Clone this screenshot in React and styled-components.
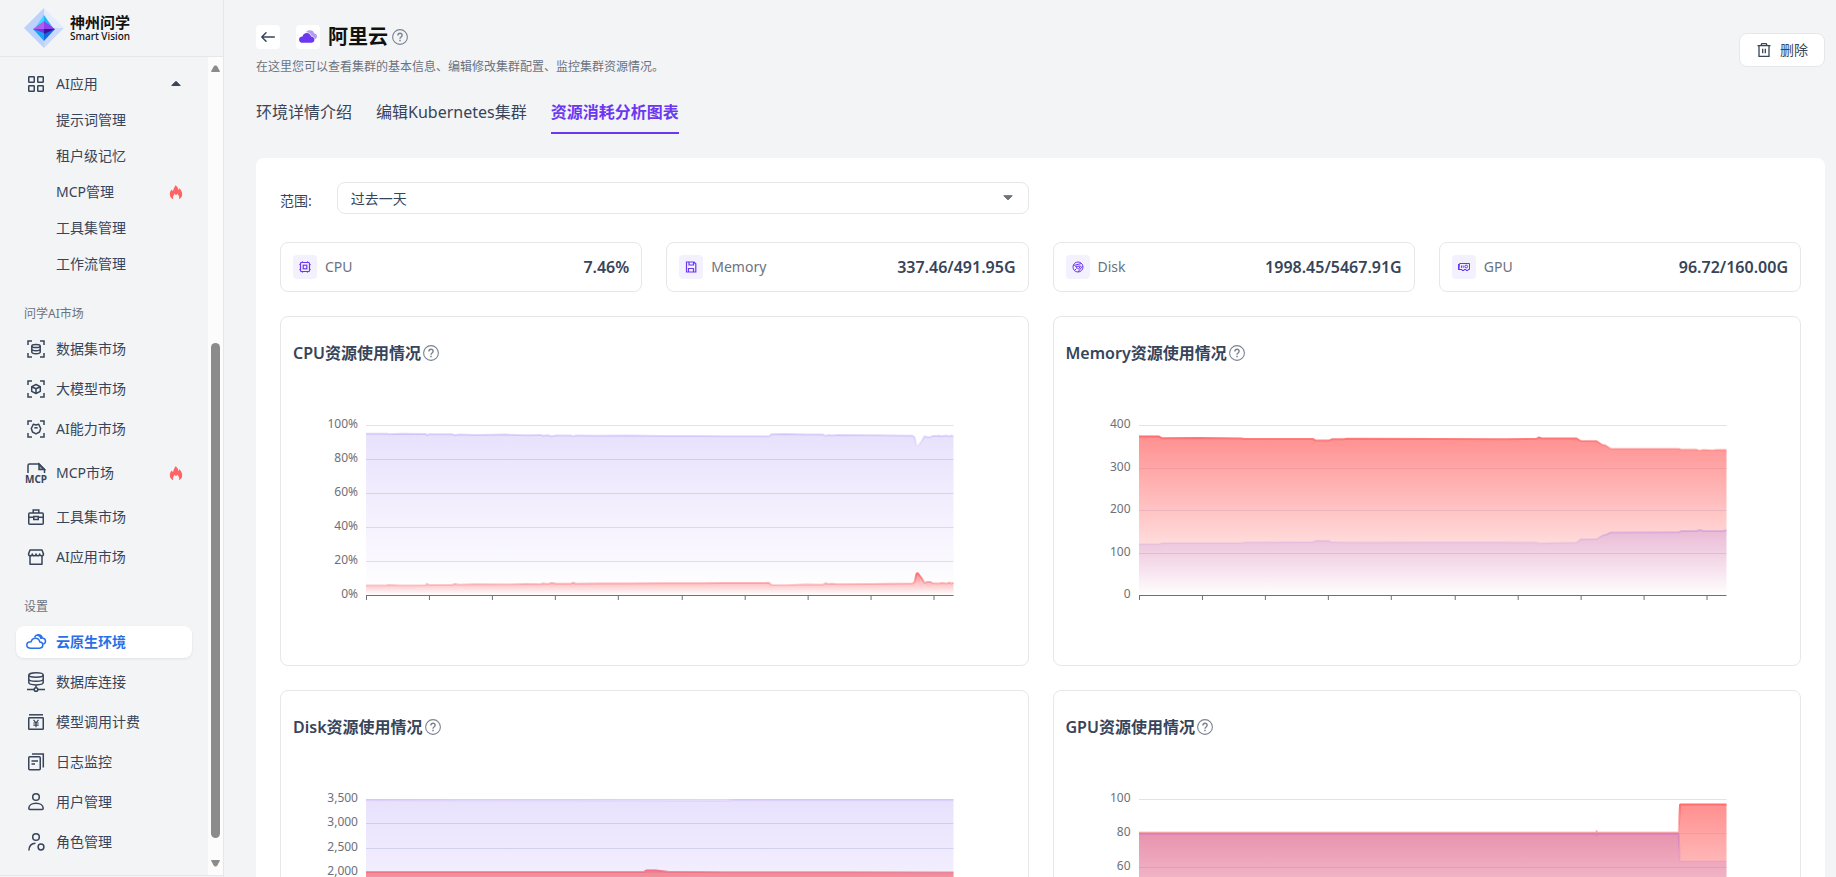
import React, { useId } from "react";
import styled, { createGlobalStyle, css } from "styled-components";

const c = {
  page: "#f3f4f6",
  line: "#e5e7eb",
  ink: "#374459",
  muted: "#6b7280",
  purple: "#6b38f0",
  blue: "#2970e6",
  red: "#ff6b6b",
};

const GlobalStyle = createGlobalStyle`
  *, *::before, *::after { box-sizing: border-box; }
  body {
    margin: 0;
    background: ${c.page};
    color: ${c.ink};
    font-family: "Noto Sans", "Noto Sans CJK SC", sans-serif;
    font-size: 14px;
  }
  h1, h2, p, ul { margin: 0; padding: 0; }
  ul { list-style: none; }
  a { color: inherit; text-decoration: none; }
  button, select { font: inherit; color: inherit; }
  svg { display: block; flex: none; }
`;

/* ---------- layout ---------- */

const Shell = styled.div`
  display: flex;
  height: 100vh;
  overflow: hidden;
`;

const Sidebar = styled.aside`
  display: flex;
  flex-direction: column;
  flex: none;
  width: 224px;
  border-right: 1px solid ${c.line};
`;

const Brand = styled.div`
  display: flex;
  align-items: center;
  gap: 6px;
  height: 57px;
  padding: 0 24px;
  border-bottom: 1px solid ${c.line};
  color: #111;
`;

const BrandText = styled.div`
  display: flex;
  flex-direction: column;
`;

const BrandName = styled.span`
  font-size: 15px;
  line-height: 16px;
  font-weight: 700;
`;

const BrandSub = styled.span`
  font-size: 10px;
  line-height: 12px;
  font-weight: 500;
`;

const SideBody = styled.div`
  display: flex;
  flex: 1;
  min-height: 0;
`;

const SideFoot = styled.div`
  height: 2px;
  border-top: 1px solid ${c.line};
`;

const Nav = styled.nav`
  flex: 1;
  padding: 11px 16px;
  overflow: hidden;
`;

const NavList = styled.ul`
  display: flex;
  flex-direction: column;
  gap: ${(p) => (p.$dense ? 4 : 8)}px;
`;

const NavLabel = styled.h2`
  margin: 25px 0 10px;
  padding-left: 8px;
  color: ${c.muted};
  font-size: 12px;
  line-height: 18px;
  font-weight: 400;
`;

const NavLink = styled.a`
  display: flex;
  align-items: center;
  gap: 8px;
  height: ${(p) => (p.$tall ? 40 : 32)}px;
  padding: 0 8px;
  padding-left: ${(p) => (p.$child ? 40 : 8)}px;
  border-radius: 8px;
  line-height: 20px;
  ${(p) =>
    p.$active &&
    css`
      background: #fff;
      color: ${c.blue};
      font-weight: 700;
      box-shadow: 0 1px 3px rgba(0, 0, 0, 0.08);
    `}
`;

const NavText = styled.span`
  flex: 1;
`;

const ScrollRail = styled.div`
  display: flex;
  flex-direction: column;
  align-items: center;
  width: 15px;
  background: #fcfcfc;
`;

const RailSpace = styled.div`
  flex: ${(p) => p.$grow} 0 0;
`;

const RailThumb = styled.div`
  flex: 495 0 0;
  width: 9px;
  border-radius: 5px;
  background: #8b8b8b;
`;

const Main = styled.main`
  flex: 1;
  min-width: 0;
  padding: 24px 11px 24px 32px;
  overflow-y: auto;
  scrollbar-width: none;
`;

const PageHead = styled.header`
  display: flex;
  align-items: center;
  justify-content: space-between;
`;

const TitleRow = styled.div`
  display: flex;
  align-items: center;
`;

const Tile = styled.span`
  display: flex;
  align-items: center;
  justify-content: center;
  flex: none;
  width: 24px;
  height: 24px;
  border-radius: 4px;
  background: ${(p) => (p.$tint ? "#f4f1ff" : "#fff")};
  color: ${c.purple};
`;

const BackButton = styled.button`
  display: flex;
  align-items: center;
  justify-content: center;
  width: 24px;
  height: 24px;
  margin-right: 16px;
  padding: 0;
  border: 0;
  border-radius: 4px;
  background: #fff;
`;

const PageTitle = styled.h1`
  margin: 0 4px 0 8px;
  color: #111;
  font-size: 20px;
  line-height: 26px;
  font-weight: 700;
`;

const PageDesc = styled.p`
  margin-top: 8px;
  color: ${c.muted};
  font-size: 12px;
  line-height: 18px;
`;

const DeleteButton = styled.button`
  display: flex;
  align-items: center;
  gap: 8px;
  height: 34px;
  padding: 0 16px;
  border: 1px solid ${c.line};
  border-radius: 8px;
  background: #fff;
  line-height: 20px;
`;

const Tabs = styled.nav`
  display: flex;
  gap: 24px;
  margin-top: 24px;
`;

const Tab = styled.a`
  padding-bottom: 8px;
  border-bottom: 2px solid ${(p) => (p.$active ? c.purple : "transparent")};
  color: ${(p) => (p.$active ? c.purple : c.ink)};
  font-size: 16px;
  line-height: 24px;
  font-weight: ${(p) => (p.$active ? 700 : 400)};
`;

const Panel = styled.section`
  margin-top: 24px;
  padding: 24px;
  border-radius: 8px;
  background: #fff;
`;

const Halves = styled.div`
  display: grid;
  grid-template-columns: repeat(2, minmax(0, 1fr));
  gap: 24px;
`;

const Quarters = styled.div`
  display: grid;
  grid-template-columns: repeat(4, minmax(0, 1fr));
  gap: 24px;
  margin: 28px 0 24px;
`;

const Field = styled.div`
  display: flex;
  align-items: center;
  gap: 25px;
`;

const FieldLabel = styled.label`
  padding-top: 5px;
  line-height: 20px;
`;

const SelectBox = styled.div`
  display: grid;
  flex: 1;
  align-items: center;
  > * {
    grid-area: 1 / 1;
  }
  > svg {
    justify-self: end;
    margin-right: 15px;
    pointer-events: none;
  }
`;

const Select = styled.select`
  appearance: none;
  width: 100%;
  height: 32px;
  padding: 0 13px;
  border: 1px solid ${c.line};
  border-radius: 8px;
  background: #fff;
`;

const Stat = styled.div`
  display: flex;
  align-items: center;
  gap: 8px;
  height: 50px;
  padding: 0 12px;
  border: 1px solid ${c.line};
  border-radius: 8px;
`;

const StatName = styled.span`
  flex: 1;
  color: ${c.muted};
  line-height: 20px;
`;

const StatValue = styled.span`
  font-size: 16px;
  line-height: 24px;
  font-weight: 600;
`;

const ChartCard = styled.article`
  min-height: 350px;
  padding: 24px 12px;
  border: 1px solid ${c.line};
  border-radius: 8px;
`;

const ChartTitle = styled.h2`
  display: flex;
  align-items: center;
  gap: 2px;
  font-size: 16px;
  line-height: 24px;
  font-weight: 600;
`;

const Plot = styled.div`
  display: grid;
  grid-template-columns: 73px minmax(0, 1fr) 62px;
  margin-top: 51px;
`;

const Axis = styled.div`
  display: flex;
  flex-direction: column;
  justify-content: space-between;
  height: 186px;
  padding-right: 8px;
  color: #6e7079;
  font-size: 12px;
  line-height: 16px;
  text-align: right;
`;

const PlotSvg = styled.svg`
  width: 100%;
  height: 176px;
  margin-top: 9px;
  overflow: visible;
`;

/* ---------- icons ---------- */

const Icon = ({ size = 24, w = 1.5, children, ...rest }) => (
  <svg
    width={size}
    height={size}
    viewBox={`0 0 ${size} ${size}`}
    fill="none"
    stroke="currentColor"
    strokeWidth={w}
    aria-hidden="true"
    {...rest}
  >
    {children}
  </svg>
);

const Corners = () => <path d="M4 8V4h4M16 4h4v4M20 16v4h-4M8 20H4v-4" />;

const icons = {
  apps: (
    <Icon>
      <rect x="4.75" y="4.75" width="5.5" height="5.5" rx="0.6" />
      <rect x="13.75" y="4.75" width="5.5" height="5.5" rx="0.6" />
      <rect x="4.75" y="13.75" width="5.5" height="5.5" rx="0.6" />
      <rect x="13.75" y="13.75" width="5.5" height="5.5" rx="0.6" />
    </Icon>
  ),
  dataset: (
    <Icon>
      <Corners />
      <ellipse cx="12" cy="9" rx="4.2" ry="1.6" />
      <path d="M7.8 9v6c0 .9 1.9 1.7 4.2 1.7s4.2-.8 4.2-1.7V9M7.8 12c0 .9 1.9 1.7 4.2 1.7s4.2-.8 4.2-1.7" />
    </Icon>
  ),
  model: (
    <Icon>
      <Corners />
      <path d="M12 7.5l4.3 2.2v4.6L12 16.5l-4.3-2.2V9.7zM7.7 9.7l4.3 2 4.3-2M12 11.7v4.8" strokeLinejoin="round" />
    </Icon>
  ),
  ability: (
    <Icon>
      <Corners />
      <path d="M9.3 7.3L12 8l2.7-.7 2 4.2-1.2 3.5L12 16.8 8.5 15l-1.2-3.5z" strokeLinejoin="round" />
      <path d="M10.3 10.8h3.4" />
    </Icon>
  ),
  mcp: (
    <Icon overflow="visible">
      <path d="M4 12V4.5c0-1 .5-1.500 1.500-1.500H15l5.500 5.500V12" />
      <path d="M15 3v5.500h5.500z" fill="currentColor" fillOpacity="0.5" />
      <text x="12" y="21.500" textAnchor="middle" fontSize="10" fontWeight="700" fill="currentColor" stroke="none">
        MCP
      </text>
    </Icon>
  ),
  toolbox: (
    <Icon>
      <rect x="4.75" y="8" width="14.5" height="11.25" rx="1" />
      <path d="M9.2 8V5h5.600v3M4.750 12.200h4.800M14.500 12.200h4.750M9.750 11.500h4.500v3h-4.500z" />
    </Icon>
  ),
  store: (
    <Icon>
      <path d="M6 5h12l1.500 4c0 1-.8 1.800-2 1.800s-1.800-.8-1.800-1.800c0 1-.8 1.800-1.850 1.800S12 10 12 9c0 1-.8 1.800-1.850 1.800S8.300 10 8.300 9c0 1-.7 1.800-1.800 1.800s-2-.8-2-1.800z" strokeLinejoin="round" />
      <path d="M6 11v8.200h12V11" strokeLinejoin="round" />
    </Icon>
  ),
  cloud: (
    <Icon>
      <path d="M7 18.200h8.500c2 0 3.300-1.400 3.300-3.100 0-1.800-1.300-3.100-3-3.100-.5-2.400-2.200-3.800-4.300-3.800-2.300 0-3.900 1.500-4.400 3.600-2.300 0-4.300 1-4.300 3.200 0 1.900 1.800 3.200 4.200 3.200z" strokeLinejoin="round" />
      <path d="M10.500 7.300c.8-1.600 2-2.500 3.600-2.500 2.200 0 3.800 1.300 4.200 3.300 1.900.3 3.200 1.500 3.200 3.200 0 1.400-.8 2.400-2.300 2.800M13 5.300c2.400.1 3.700 1.600 4 3.700" />
    </Icon>
  ),
  database: (
    <Icon>
      <ellipse cx="12" cy="5" rx="7.2" ry="2.2" />
      <path d="M4.800 5v7.600c0 1.300 3.200 2.300 7.200 2.300s7.200-1 7.200-2.300V5M4.800 8.900c0 1.300 3.200 2.300 7.200 2.300s7.200-1 7.200-2.300M12 15v2.500M3 19.500h7M14 19.500h7" />
      <circle cx="12" cy="19.500" r="1.800" />
    </Icon>
  ),
  billing: (
    <Icon>
      <path d="M5 4.800h14" />
      <rect x="4.75" y="7.75" width="14.5" height="11.5" rx="0.6" />
      <path d="M9.500 9.800l2.500 3 2.500-3M12 12.800v4.400M9.300 13h5.400M9.300 15.200h5.400" strokeWidth="1.2" />
    </Icon>
  ),
  logs: (
    <Icon>
      <path d="M8 4h11.300v13.500" />
      <rect x="4.75" y="6.75" width="11.5" height="13" rx="1" />
      <path d="M7.500 11h6.500M7.500 14h3.500" />
    </Icon>
  ),
  user: (
    <Icon>
      <circle cx="12" cy="7" r="3.3" />
      <path d="M5.800 19.500c-.7 0-1-.5-1-1.200 0-3 3.200-5 7.200-5s7.200 2 7.200 5c0 .7-.3 1.200-1 1.200z" />
    </Icon>
  ),
  role: (
    <Icon>
      <circle cx="12" cy="7" r="3.3" />
      <path d="M4.900 20.500c.2-4.700 3-7.300 6.600-7.300" />
      <circle cx="17" cy="17" r="2.9" />
    </Icon>
  ),
};

const Fire = () => (
  <Icon size={16} fill="#ff6464" stroke="none">
    <path d="M7.300 1.200c1.500.9 3 2.400 3 4.700.6-.3.900-.9 1-1.600 1.700 1.600 2.900 3.700 2.900 5.900 0 2.300-1.200 4-3.100 5 .5-2.200-.5-3.900-2-5.600-.2.900-.6 1.500-1.300 1.900-.1-.7-.5-1.200-1-1.700C5.300 11.300 4.600 13 5.200 15.200 3.200 14.300 1.800 12.600 1.800 10.200c0-1.900.8-3.400 2-4.700.2.800.6 1.300 1.300 1.600C5.300 4.600 6.700 3.200 7.300 1.200z" />
  </Icon>
);

const CaretUp = () => (
  <Icon size={16} fill={c.ink} w={1} strokeLinejoin="round">
    <path d="M3.800 9.500h8.400L8 5.300z" />
  </Icon>
);

const CaretDown = () => (
  <Icon size={12} fill={c.muted} stroke={c.muted} w={1} strokeLinejoin="round">
    <path d="M1.800 3.700h8.400L6 7.900z" />
  </Icon>
);

const RailArrow = ({ up }) => (
  <svg width="15" height="20" fill="#8b8b8b" stroke="#8b8b8b" strokeLinejoin="round" aria-hidden="true">
    <path d={up ? "M3.500 14.500h8l-3-5.500h-2z" : "M3.500 5.500h8l-3 5.500h-2z"} />
  </svg>
);

const Help = () => (
  <Icon size={16} w={1.1} stroke="#7b8290">
    <circle cx="8" cy="8" r="7.4" />
    <path d="M5.900 6.500c0-1.300.9-2.200 2.100-2.200s2.100.8 2.100 2c0 1.700-2.100 1.600-2.100 3.400" strokeWidth="1.4" />
    <path d="M8 10.800v1.500" strokeWidth="1.5" />
  </Icon>
);

const BackArrow = () => (
  <Icon size={16} strokeLinecap="round" strokeLinejoin="round">
    <path d="M14.300 8H1.800M6 3.800L1.800 8 6 12.200" />
  </Icon>
);

const Trash = () => (
  <Icon size={16} w={1.3}>
    <path d="M1.500 3.600h13M5 3.300l.8-1.700h4.400l.8 1.700M3 3.600v10.800h10V3.600M6.700 6.800v4.400M9.300 6.800v4.400" />
  </Icon>
);

const CloudFill = () => (
  <Icon size={20} fill={c.purple} stroke="none">
    <path d="M8 5.200c1-1.500 2.300-2 4-2 2.300 0 3.600 1.200 4 3.100 1.700.2 3 1.300 3 3 0 1.400-.8 2.500-2.200 2.900-.5-1.900-1.800-2.900-3.200-3.100C13 6.800 11 5.200 8 5.200z" opacity="0.5" />
    <path d="M4.800 15.800c-2.200 0-3.800-1.200-3.800-3.100 0-1.900 1.500-3.100 3.500-3.100C5 7.300 6.600 6 8.800 6c2.200 0 3.800 1.400 4.200 3.600 2 .1 3.400 1.300 3.400 3.100s-1.300 3.100-3.300 3.100z" />
  </Icon>
);

const LogoMark = () => (
  <svg width="40" height="40" viewBox="0 0 40 40" aria-hidden="true">
    <path d="M20 0L0 20l20 20z" fill="#bcd2fb" />
    <path d="M20 0l20 20H20z" fill="#e3ebfd" />
    <path d="M20 40l20-20H20z" fill="#c9dafb" />
    <path d="M20 7l-9 13h9z" fill="#35dcfb" />
    <path d="M20 7l9 13h-9z" fill="#22b4f6" />
    <path d="M20 33L9 21h11z" fill="#1ea2f4" />
    <path d="M20 33l11-12H20z" fill="#1169e8" />
    <path d="M9 21l11-8v9z" fill="#b25cf2" />
    <path d="M31 21l-11-8v9z" fill="#9040ee" />
    <path d="M9 21h11v4z" fill="#6a3ae0" />
    <path d="M31 21H20v5z" fill="#3b129c" />
  </svg>
);

const statIcons = {
  cpu: (
    <Icon size={12} w={1.2}>
      <rect x="1.5" y="1.5" width="9" height="9" rx="1" />
      <rect x="4.2" y="4.2" width="3.6" height="3.6" />
      <path d="M3.500 0v1M8.500 0v1M3.500 11v1M8.500 11v1M0 3.500h1M0 8.500h1M11 3.500h1M11 8.500h1" strokeOpacity="0.6" />
    </Icon>
  ),
  memory: (
    <Icon size={12} w={1.2}>
      <path d="M1.500 1h7.500l1.800 1.800V11H1.500zM4 1v3h4.500V1M3.500 11V7.500h5V11" />
    </Icon>
  ),
  disk: (
    <Icon size={12} w={1}>
      <circle cx="6" cy="6" r="5" />
      <path d="M1.500 4.500L9.500 2.500M3.500 5.500l5-.5-2 3zM10.500 5L6 11M2.500 9.500l2-2" />
    </Icon>
  ),
  gpu: (
    <Icon size={12} w={1}>
      <path d="M1.500 2.500h10v6h-1.500v1h-2v-1h-2v1h-2v-1h-3zM.5 3v6" />
      <circle cx="8.2" cy="5.5" r="1.4" />
      <path d="M3.500 4.500v2.300M5.200 4.500v2.300" />
    </Icon>
  ),
};

/* ---------- data ---------- */

const toPairs = (s) => s.trim().split(/\s+/).map((p) => p.split(",").map(Number));

const cpuUsed = toPairs(`0,160.5 21,160.5 22,160 35,160.4 60,160.3 61,158.8 63,160 86,160 89,159 93,159.8
  110,159.3 140,159.6 160,159 175,159.3 177,158.5 182,159 186,158 190,158.8 205,158.8 207,157.8 210,158.8
  233,158.4 260,158.6 300,158.2 334,158.2 360,158 400,158 403,157.7 406,160 420,160.3 440,159.6 457,159.8
  460,158.3 463,159.3 466,158.8 472,159.3 506,158.9 547,158.5 549,157 551,149 552,148 556,153 559,158 562,157
  565,157 567,158.3 574,158.5 576,158 581,158.6 584,157.7 586,158.7 588,157.5`);
const cpuFree = cpuUsed.map(([x, y]) => [x, 169.2 - y]);

const memUsed = toPairs(`0,11.5 20,11.5 23,13.3 60,13 102,13.4 106,14 174,14 177,15.6 190,15.6 193,14.3
  205,14.3 208,13.8 300,14 366,14.2 398,13.8 400,12.5 403,13.5 438,13.5 442,16 458,16.3 464,20 467,20.5 472,23.7
  540,23.7 543,24.6 558,24.6 561,25.5 565,24.8 574,25.3 578,24.8 588,24.8`);
const memFree = toPairs(`0,119 20,119 23,118 102,118 108,117.3 174,117 177,115.7 190,115.7 192,117 208,117.6
  300,117.3 350,117.2 398,117.5 400,118.3 438,117.5 442,114.3 458,114 464,110.5 467,109.8 472,107.5 540,107.3
  543,106 558,106 561,105 565,106 585,106 588,105`);

const diskUsed = toPairs(`0,73 278,73 281,71.5 290,71.5 302,72.8 360,73.2 480,73.2 588,73.4`);
const diskFree = toPairs(`0,1.2 100,1.4 200,1.5 360,1.7 370,1.2 588,1.2`);

const gpuUsed = toPairs(`0,33.2 457,33.2 458,31.5 459,33.2 540,33.2 541.5,5.5 588,5.5`);
const gpuFree = toPairs(`0,34.8 457,34.8 458,36 459,34.8 540,34.8 541.5,62 588,62`);

const charts = [
  { title: "CPU资源使用情况", ticks: ["100%", "80%", "60%", "40%", "20%", "0%"], used: cpuUsed, free: cpuFree },
  { title: "Memory资源使用情况", ticks: ["400", "300", "200", "100", "0"], used: memUsed, free: memFree },
  {
    title: "Disk资源使用情况",
    ticks: ["3,500", "3,000", "2,500", "2,000", "1,500", "1,000", "500", "0"],
    used: diskUsed,
    free: diskFree,
  },
  { title: "GPU资源使用情况", ticks: ["100", "80", "60", "40", "20", "0"], used: gpuUsed, free: gpuFree },
];

const stats = [
  { icon: "cpu", name: "CPU", value: "7.46%" },
  { icon: "memory", name: "Memory", value: "337.46/491.95G" },
  { icon: "disk", name: "Disk", value: "1998.45/5467.91G" },
  { icon: "gpu", name: "GPU", value: "96.72/160.00G" },
];

const appLinks = [
  { text: "提示词管理" },
  { text: "租户级记忆" },
  { text: "MCP管理", hot: true },
  { text: "工具集管理" },
  { text: "工作流管理" },
];

const sections = [
  {
    label: "问学AI市场",
    items: [
      { icon: "dataset", text: "数据集市场" },
      { icon: "model", text: "大模型市场" },
      { icon: "ability", text: "AI能力市场" },
      { icon: "mcp", text: "MCP市场", hot: true, tall: true },
      { icon: "toolbox", text: "工具集市场" },
      { icon: "store", text: "AI应用市场" },
    ],
  },
  {
    label: "设置",
    items: [
      { icon: "cloud", text: "云原生环境", active: true },
      { icon: "database", text: "数据库连接" },
      { icon: "billing", text: "模型调用计费" },
      { icon: "logs", text: "日志监控" },
      { icon: "user", text: "用户管理" },
      { icon: "role", text: "角色管理" },
    ],
  },
];

/* ---------- parts ---------- */

function Series({ points, color, area, line }) {
  const id = useId();
  const path = "M" + points.map((p) => p.join(",")).join("L");
  const ys = points.map((p) => p[1]);
  const top = Math.min(...ys);
  const low = Math.max(...ys);
  return (
    <g>
      <defs>
        <linearGradient id={id + "a"} gradientUnits="userSpaceOnUse" x1="0" x2="0" y1={top} y2="170">
          <stop offset="0" stopColor={color} stopOpacity={area} />
          <stop offset="1" stopColor={color} stopOpacity="0" />
        </linearGradient>
        <linearGradient id={id + "l"} gradientUnits="userSpaceOnUse" x1="0" x2="0" y1={top - 1} y2={low + 2}>
          <stop offset="0" stopColor={color} stopOpacity={line} />
          <stop offset="1" stopColor={color} stopOpacity={line * 0.2} />
        </linearGradient>
      </defs>
      <path d={`${path}V170H0Z`} fill={`url(#${id}a)`} />
      <path d={path} fill="none" stroke={`url(#${id}l)`} strokeWidth="2" strokeLinejoin="bevel" />
    </g>
  );
}

function Chart({ title, ticks, used, free }) {
  const last = ticks.length - 1;
  return (
    <ChartCard>
      <ChartTitle>
        {title}
        <Help />
      </ChartTitle>
      <Plot>
        <Axis>
          {ticks.map((t) => (
            <span key={t}>{t}</span>
          ))}
        </Axis>
        <PlotSvg viewBox="0 0 588 176" preserveAspectRatio="none" role="img" aria-label={title}>
          {ticks.slice(0, last).map((t, i) => (
            <rect key={t} x="0" y={Math.round((i * 170) / last)} width="588" height="1" fill="#dfe3ef" />
          ))}
          <Series points={used} color={c.red} area={0.75} line={1} />
          <Series points={free} color={c.purple} area={0.15} line={0.2} />
          <g fill="#6e7079">
            <rect x="0" y="170" width="588" height="1" />
            {Array.from({ length: 10 }, (_, i) => (
              <rect key={i} x={Math.round(i * 63.1)} y="170" width="1" height="5" />
            ))}
          </g>
        </PlotSvg>
      </Plot>
    </ChartCard>
  );
}

function NavItem({ icon, text, hot, tall, active, child }) {
  return (
    <li>
      <NavLink href="#" $tall={tall} $active={active} $child={child} aria-current={active ? "page" : undefined}>
        {icon && icons[icon]}
        <NavText>{text}</NavText>
        {hot && <Fire />}
      </NavLink>
    </li>
  );
}

export default function App() {
  return (
    <>
      <GlobalStyle />
      <Shell>
        <Sidebar>
          <Brand>
            <LogoMark />
            <BrandText>
              <BrandName>神州问学</BrandName>
              <BrandSub>Smart Vision</BrandSub>
            </BrandText>
          </Brand>
          <SideBody>
            <Nav>
              <NavList $dense>
                <li>
                  <NavLink href="#">
                    {icons.apps}
                    <NavText>AI应用</NavText>
                    <CaretUp />
                  </NavLink>
                </li>
                {appLinks.map((item) => (
                  <NavItem key={item.text} child {...item} />
                ))}
              </NavList>
              {sections.map((s) => (
                <React.Fragment key={s.label}>
                  <NavLabel>{s.label}</NavLabel>
                  <NavList>
                    {s.items.map((item) => (
                      <NavItem key={item.text} {...item} />
                    ))}
                  </NavList>
                </React.Fragment>
              ))}
            </Nav>
            <ScrollRail>
              <RailArrow up />
              <RailSpace $grow={266} />
              <RailThumb />
              <RailSpace $grow={17} />
              <RailArrow />
            </ScrollRail>
          </SideBody>
          <SideFoot />
        </Sidebar>
        <Main>
          <PageHead>
            <div>
              <TitleRow>
                <BackButton type="button" aria-label="返回">
                  <BackArrow />
                </BackButton>
                <Tile>
                  <CloudFill />
                </Tile>
                <PageTitle>阿里云</PageTitle>
                <Help />
              </TitleRow>
              <PageDesc>在这里您可以查看集群的基本信息、编辑修改集群配置、监控集群资源情况。</PageDesc>
            </div>
            <DeleteButton type="button">
              <Trash />
              删除
            </DeleteButton>
          </PageHead>
          <Tabs>
            <Tab href="#">环境详情介绍</Tab>
            <Tab href="#">编辑Kubernetes集群</Tab>
            <Tab href="#" $active aria-current="page">
              资源消耗分析图表
            </Tab>
          </Tabs>
          <Panel>
            <Halves>
              <Field>
                <FieldLabel htmlFor="range">范围:</FieldLabel>
                <SelectBox>
                  <Select id="range" defaultValue="day">
                    <option value="day">过去一天</option>
                  </Select>
                  <CaretDown />
                </SelectBox>
              </Field>
            </Halves>
            <Quarters>
              {stats.map((s) => (
                <Stat key={s.name}>
                  <Tile $tint>{statIcons[s.icon]}</Tile>
                  <StatName>{s.name}</StatName>
                  <StatValue>{s.value}</StatValue>
                </Stat>
              ))}
            </Quarters>
            <Halves>
              {charts.map((chart) => (
                <Chart key={chart.title} {...chart} />
              ))}
            </Halves>
          </Panel>
        </Main>
      </Shell>
    </>
  );
}
